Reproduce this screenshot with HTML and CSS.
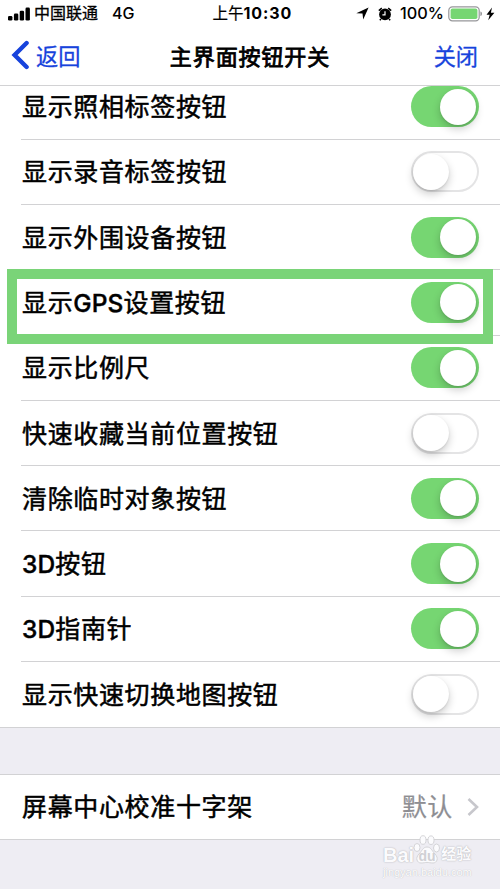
FILE: index.html
```
<!DOCTYPE html>
<html lang="zh-CN">
  <head>
    <meta charset="utf-8" />
    <title>主界面按钮开关</title>
    <link rel="stylesheet" href="styles.css">
  </head>
  <body>
    <header>
      <div class="status">
        <div class="status-left">
          <svg class="signal" width="22" height="14" viewBox="0 0 22 14">
            <rect x="0" y="9" width="4.4" height="4.5" rx="1.3" />
            <rect x="5.9" y="6.6" width="4.4" height="6.9" rx="1.3" />
            <rect x="11.7" y="3.8" width="4.4" height="9.7" rx="1.3" />
            <rect x="17.5" y="0.6" width="4.4" height="12.9" rx="1.3" />
          </svg>
          <span class="carrier">中国联通</span>
          <span class="net">4G</span>
        </div>
        <div class="time">上午<b>10:30</b></div>
        <div class="status-right">
          <svg class="location" width="13" height="13" viewBox="0 0 13 13">
            <path d="M12.6 .4 7.2 12.6 6.5 6.6.3 6.2z" />
          </svg>
          <svg class="alarm" width="14" height="14" viewBox="0 0 14 14">
            <circle cx="7" cy="7.4" r="5.9" />
            <path class="bell" d="M.8 3.6 3.8 1.1M13.2 3.6 10.2 1.1M3 12 1.8 13.3M11 12l1.2 1.3" />
            <path class="hands" d="M7 4.3v3.6H4.4" />
          </svg>
          <span class="percent">100%</span>
          <svg class="battery" width="35" height="16" viewBox="0 0 35 16">
            <rect class="shell" x=".8" y=".8" width="30.4" height="14" rx="3.6" />
            <rect class="level" x="2.6" y="2.6" width="26.8" height="10.4" rx="1.8" />
            <path class="cap" d="M32.4 5.5c2.2.4 2.2 4.2 0 4.6z" />
          </svg>
          <svg class="bolt" width="9" height="14" viewBox="0 0 9 14">
            <path d="M6 .6.5 7.7h3.2L2.2 13.2 8.4 5.8H4.9z" />
          </svg>
        </div>
      </div>
      <div class="nav">
        <a class="back">
          <svg width="18" height="30" viewBox="0 0 18 30">
            <path d="M15.6 3 3.6 15l12 12" />
          </svg>
          <span>返回</span>
        </a>
        <h1>主界面按钮开关</h1>
        <a class="close">关闭</a>
      </div>
    </header>

    <ul class="list">
      <li><span>显示照相标签按钮</span><i class="switch on"></i></li>
      <li><span>显示录音标签按钮</span><i class="switch"></i></li>
      <li><span>显示外围设备按钮</span><i class="switch on"></i></li>
      <li class="marked"><span>显示<em>GPS</em>设置按钮</span><i class="switch on"></i></li>
      <li><span>显示比例尺</span><i class="switch on"></i></li>
      <li><span>快速收藏当前位置按钮</span><i class="switch"></i></li>
      <li><span>清除临时对象按钮</span><i class="switch on"></i></li>
      <li><span><em>3D</em>按钮</span><i class="switch on"></i></li>
      <li><span><em>3D</em>指南针</span><i class="switch on"></i></li>
      <li><span>显示快速切换地图按钮</span><i class="switch"></i></li>
    </ul>

    <div class="cell">
      <span>屏幕中心校准十字架</span>
      <span class="value">默认</span>
      <svg width="12" height="20" viewBox="0 0 12 20">
        <path d="M1.5 2 10 10l-8.5 8" />
      </svg>
    </div>

    <div class="watermark">
      <div class="logo">
        <span class="bai">Bai</span>
        <svg width="28" height="30" viewBox="0 0 28 30">
          <ellipse cx="4" cy="12.5" rx="3" ry="4" />
          <ellipse cx="10" cy="5" rx="3" ry="4.3" />
          <ellipse cx="18" cy="5.2" rx="3" ry="4.3" />
          <ellipse cx="23.5" cy="13" rx="3" ry="4" />
          <path d="M14 12c4 0 5 4 8 7 4 4 2 9-2 9-3 0-4-.6-6-.6s-3 .6-6 .6c-4 0-6-5-2-9 3-3 4-7 8-7z" />
          <text x="14" y="25.5" text-anchor="middle">du</text>
        </svg>
        <span class="jy">经验</span>
      </div>
      <div class="site">jingyan.baidu.com</div>
    </div>
  </body>
</html>
```

FILE: styles.css
```
*{
  margin: 0;
  padding: 0;
  box-sizing: border-box;
}
body{
  position: relative;
  height: 889px;
  overflow: hidden;
  background: #eeedf3;
  color: #000;
  font-family: Inter, "Noto Sans CJK SC", sans-serif;
}
header{
  height: 86px;
  background: #fff;
  border-bottom: 1px solid #d2d2d4;
}
.status{
  display: grid;
  grid-template-columns: 1fr 78px 1fr;
  height: 27px;
  align-items: center;
  padding: 0 5px 0 8px;
  font-size: 15.5px;
  line-height: 27px;
  white-space: nowrap;
}
.status-left, .status-right{
  display: flex;
  align-items: center;
}
.status-right{
  justify-content: flex-end;
}
.carrier{
  margin-left: 4px;
  font-size: 16px;
  font-weight: 400;
  -webkit-text-stroke: .3px #000;
}
.net{
  margin-left: 14px;
  font-size: 16px;
  font-weight: 500;
}
.time{
  -webkit-text-stroke: .2px #000;
}
.time b{
  font-weight: 700;
  font-size: 16px;
  letter-spacing: .9px;
  -webkit-text-stroke: 0;
}
.alarm{
  margin: 0 8px 0 9px;
}
.alarm .bell{
  stroke: #000;
  stroke-width: 1.5;
}
.alarm .hands{
  fill: none;
  stroke: #fff;
  stroke-width: 1.2;
}
.percent{
  font-size: 16.3px;
  font-weight: 500;
}
.battery{
  margin: 0 3px 0 4px;
}
.battery .shell{
  fill: none;
  stroke: #97979a;
  stroke-width: 1.2;
}
.battery .level{
  fill: #76d672;
}
.battery .cap{
  fill: #97979a;
}
.nav{
  display: grid;
  grid-template-columns: 1fr auto 1fr;
  align-items: center;
  height: 56px;
  padding: 0 22px 0 11px;
  font-size: 22.2px;
}
.nav h1{
  font-size: 22px;
  letter-spacing: .9px;
  font-weight: 400;
  -webkit-text-stroke: .8px #000;
  margin-left: 11px;
}
.nav a{
  color: #1743dc;
  -webkit-text-stroke: .3px #1743dc;
}
.back{
  display: flex;
  align-items: center;
}
.back svg{
  margin-right: 7px;
}
.back path{
  fill: none;
  stroke: #1743dc;
  stroke-width: 4.4;
  stroke-linecap: round;
}
.close{
  text-align: right;
}

.list{
  list-style: none;
  background: #fff;
  border-bottom: 1px solid #d2d2d4;
}
.list li{
  position: relative;
  display: flex;
  align-items: center;
  justify-content: space-between;
  height: 65.3px;
  margin-left: 21px;
  padding: 0 21.5px 0 0;
  border-bottom: 1px solid #d2d2d4;
}
/* the first row is scrolled partly under the header */
.list li:first-child{
  height: 53.7px;
  padding-bottom: 11px;
}
.list li:last-child{
  border-bottom: 0;
  height: 64.8px;
}
.list span, .cell span{
  padding: 1px 0 0 1px;
  font-size: 25px;
  letter-spacing: .65px;
  -webkit-text-stroke: .5px currentColor;
  line-height: 40px;
}
.list em{
  font-style: normal;
  font-weight: 500;
  font-size: 24.5px;
  letter-spacing: .1px;
  -webkit-text-stroke: .4px #000;
}
.switch{
  flex: none;
  width: 68px;
  height: 41px;
  padding: 2.5px;
  border-radius: 21px;
  box-shadow: inset 0 0 0 2px #e4e4e5;
}
.switch::before{
  content: "";
  display: block;
  width: 36px;
  height: 36px;
  border-radius: 50%;
  background: #fff;
  box-shadow: 0 4px 9px rgba(0,0,0,.2), 0 1px 2px rgba(0,0,0,.1);
}
.switch.on{
  background: #76d672;
  box-shadow: none;
}
.switch.on::before{
  margin-left: 27px;
}
.marked::after{
  content: "";
  box-sizing: border-box;
  position: absolute;
  z-index: 1;
  top: -1px;
  left: -14px;
  right: 7px;
  height: 74.5px;
  border: 10px solid #7ad478;
}

.cell{
  display: flex;
  align-items: center;
  height: 66px;
  margin-top: 46px;
  padding: 0 21px;
  background: #fff;
  border-top: 1px solid #d2d2d4;
  border-bottom: 1px solid #d2d2d4;
}
.cell .value{
  margin-left: auto;
  margin-right: 14px;
  color: #8e8e93;
  -webkit-text-stroke: .2px #8e8e93;
}
.cell path{
  fill: none;
  stroke: #c7c7cc;
  stroke-width: 2.6;
}

.watermark{
  position: absolute;
  left: 383px;
  top: 835px;
  width: 96px;
  color: #fbfbfd;
  font-family: "Liberation Sans", "Noto Sans CJK SC", sans-serif;
  text-shadow: 0 0 1px #b8b8bc, 0 0 2px #c4c4c8;
}
.logo{
  display: flex;
  align-items: flex-end;
  height: 30px;
}
.logo .bai{
  font-size: 20px;
  font-weight: 700;
  line-height: 20px;
}
.logo svg{
  flex: none;
  margin-left: -1px;
  fill: #fbfbfd;
  stroke: #d0d0d4;
  stroke-width: .9;
}
.logo text{
  font-size: 14px;
  font-weight: 700;
  fill: #d0d0d4;
  stroke: none;
  text-shadow: none;
}
.logo .jy{
  font-size: 15px;
  font-weight: 700;
  line-height: 22px;
  white-space: nowrap;
}
.site{
  font-size: 11px;
  line-height: 14px;
  color: #fff;
  text-shadow: 0 0 1px #a8a8ac;
}
```
